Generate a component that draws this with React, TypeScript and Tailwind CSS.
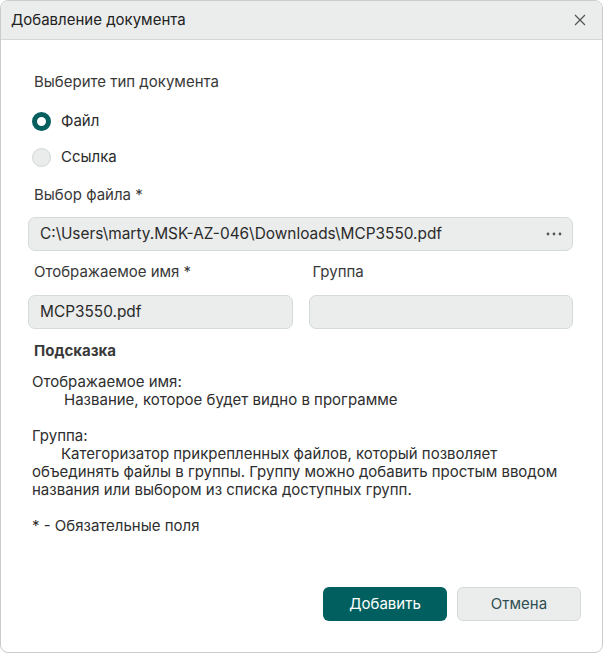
import React from "react";

export default function App() {
  return (
    <div className="w-[603px] h-[653px] bg-white" style={{ fontFamily: "Inter, 'Noto Sans', sans-serif" }}>
      <div className="w-[603px] h-[653px] border border-[#c9cccb] rounded-[8px] overflow-hidden flex flex-col bg-white">
        <div className="h-[39px] shrink-0 bg-[#ebedec] border-b border-[#d3d9d7] flex items-center justify-between pl-[10px] pr-[16px]">
          <span className="text-[15px] text-[#222]">Добавление документа</span>
          <svg width="12" height="12" viewBox="0 0 12 12" className="text-[#555]">
            <path d="M1 1L11 11M11 1L1 11" stroke="currentColor" strokeWidth="1.3" />
          </svg>
        </div>
        <div className="flex flex-col pl-[27px] pr-[29px] text-[15px] text-[#383838]">
          <div className="mt-[32px] h-[20px] leading-[20px] pl-[6px]">Выберите тип документа</div>
          <div className="mt-[17px] h-[24px] flex items-center pl-[4px] gap-[10px]">
            <span className="w-[19px] h-[19px] rounded-full border-[5px] border-[#055f5f] bg-white" />
            <span className="text-[#2a2a2a]">Файл</span>
          </div>
          <div className="mt-[12px] h-[24px] flex items-center pl-[4px] gap-[10px]">
            <span className="w-[19px] h-[19px] rounded-full border border-[#d0d6d4] bg-[#e9eceb]" />
            <span className="text-[#2a2a2a]">Ссылка</span>
          </div>
          <div className="mt-[16px] h-[20px] leading-[20px] pl-[6px]">Выбор файла *</div>
          <div className="mt-[12px] h-[34px] rounded-[7px] border border-[#d4dbd9] bg-[#ebedec] flex items-center justify-between pl-[11px] pr-[10px]">
            <span className="text-[#2a2a2a] text-[15.4px]">C:\Users\marty.MSK-AZ-046\Downloads\MCP3550.pdf</span>
            <svg width="16" height="4" viewBox="0 0 16 4">
              <circle cx="2" cy="2" r="1.4" fill="#555" />
              <circle cx="8" cy="2" r="1.4" fill="#555" />
              <circle cx="14" cy="2" r="1.4" fill="#555" />
            </svg>
          </div>
          <div className="mt-[11px] grid grid-cols-2 gap-x-[16px]">
            <div className="h-[20px] leading-[20px] pl-[6px]">Отображаемое имя *</div>
            <div className="h-[20px] leading-[20px] pl-[4px]">Группа</div>
            <div className="mt-[13px] h-[34px] rounded-[7px] border border-[#d4dbd9] bg-[#ebedec] flex items-center pl-[11px]">
              <span className="text-[#2a2a2a] text-[15.4px]">MCP3550.pdf</span>
            </div>
            <div className="mt-[13px] h-[34px] rounded-[7px] border border-[#d4dbd9] bg-[#ebedec]" />
          </div>
          <div className="mt-[12px] h-[20px] leading-[20px] pl-[6px] font-bold text-[#3a3a3a]">Подсказка</div>
          <div className="mt-[12px] pl-[4px] leading-[18px] text-[#2e2e2e]">
            <div>Отображаемое имя:</div>
            <div className="pl-[32px]">Название, которое будет видно в программе</div>
            <div className="h-[18px]" />
            <div>Группа:</div>
            <div className="indent-[29px]">
              Категоризатор прикрепленных файлов, который позволяет
              <br />
              объединять файлы в группы. Группу можно добавить простым вводом
              <br />
              названия или выбором из списка доступных групп.
            </div>
            <div className="h-[18px]" />
            <div>* - Обязательные поля</div>
          </div>
          <div className="mt-[52px] flex justify-end gap-[10px] mr-[-8px]">
            <button className="w-[124px] h-[34px] rounded-[6px] bg-[#025f5f] text-white text-[15px]">Добавить</button>
            <button className="w-[124px] h-[34px] rounded-[6px] bg-[#ebedec] border border-[#d3dad8] text-[#2e4f52] text-[15px]">Отмена</button>
          </div>
        </div>
      </div>
    </div>
  );
}
